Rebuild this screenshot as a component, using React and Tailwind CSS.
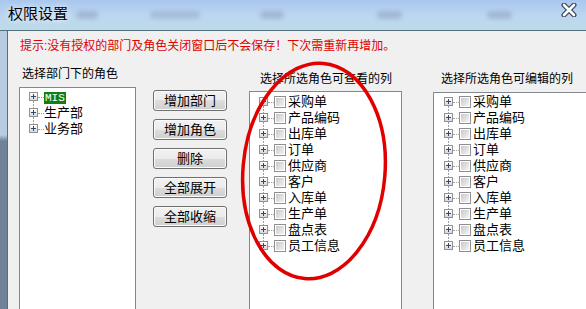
import React from "react";

const columns = ["采购单", "产品编码", "出库单", "订单", "供应商", "客户", "入库单", "生产单", "盘点表", "员工信息"];
const buttons = ["增加部门", "增加角色", "删除", "全部展开", "全部收缩"];

const Plus = () => (
  <span className="flex h-[9px] w-[9px] shrink-0 items-center justify-center border border-[#919191] bg-[linear-gradient(#ffffff,#d8d8d8)]">
    <svg width="5" height="5" viewBox="0 0 5 5">
      <path d="M0 2.5H5M2.5 0V5" stroke="#2f4a6d" strokeWidth="1" />
    </svg>
  </span>
);

const Check = () => (
  <span className="block h-[12px] w-[12px] shrink-0 border border-[#8e8f8f] bg-white p-[1px]">
    <span className="block h-full w-full bg-[linear-gradient(135deg,#c8c8c8,#f4f4f4)]" />
  </span>
);

// one tree line: plus box, dotted joints, optional checkbox
const TreeRow = ({ first, last, checkbox, children }) => (
  <div className="flex h-[16px] items-center whitespace-nowrap">
    <div className="flex h-full w-[9px] shrink-0 flex-col items-center">
      <div className={first ? "h-[3px]" : "h-[3px] w-0 border-l border-dotted border-[#a0a0a0]"} />
      <Plus />
      <div className={last ? "h-[4px]" : "h-[4px] w-0 border-l border-dotted border-[#a0a0a0]"} />
    </div>
    <div className="w-[6px] shrink-0 border-t border-dotted border-[#a0a0a0]" />
    {checkbox && <Check />}
    <span className={checkbox ? "ml-[2px] text-[13px] leading-[14px]" : "text-[13px] leading-[14px]"}>{children}</span>
  </div>
);

const Button = ({ label }) => (
  <button className="flex h-[21px] w-[74px] items-center justify-center rounded-[3px] border border-[#707070] bg-[linear-gradient(#f2f2f2,#ebebeb_50%,#dddddd_50%,#cfcfcf)] text-[13px] leading-none text-black shadow-[inset_0_0_0_1px_#fbfbfb]">
    {label}
  </button>
);

const ColumnList = () => (
  <>
    {columns.map((c, i) => (
      <TreeRow key={c} first={i === 0} last={i === columns.length - 1} checkbox>
        {c}
      </TreeRow>
    ))}
  </>
);

export default function App() {
  return (
    <div className="relative h-[309px] w-[586px] overflow-hidden bg-[#f0f0f0] font-['Liberation_Sans','Noto_Sans_CJK_SC',sans-serif] text-[12px] text-black">
      {/* aero title bar */}
      <div className="flex h-[31px] items-start border-b border-[#56707f] bg-[linear-gradient(#a9c7ee,#bdd6f1_55%,#bcdbe6)]">
        <span className="ml-[8px] mt-[5px] shrink-0 text-[15px] leading-[18px] [text-shadow:0_0_6px_#ffffff]">权限设置</span>
        <span className="ml-[8px] mt-[11px] h-[8px] w-[22px] shrink-0 rounded bg-[#6a7a8e] opacity-30 blur-[2px]" />
        <span className="ml-[52px] mt-[11px] h-[8px] w-[50px] shrink-0 rounded bg-[#6a7a8e] opacity-25 blur-[2px]" />
        <span className="ml-[60px] mt-[11px] h-[8px] w-[24px] shrink-0 rounded bg-[#6a7a8e] opacity-30 blur-[2px]" />
        <span className="ml-[93px] mt-[11px] h-[8px] w-[25px] shrink-0 rounded bg-[#6a7a8e] opacity-30 blur-[2px]" />
        <span className="ml-[85px] mt-[11px] h-[8px] w-[25px] shrink-0 rounded bg-[#6a7a8e] opacity-30 blur-[2px]" />
        <svg className="ml-[49px] mt-[3px] shrink-0" width="16" height="14" viewBox="0 0 16 14">
          <path d="M3 2L13 12M13 2L3 12" stroke="#3a4656" strokeWidth="5" strokeLinecap="round" />
          <path d="M3 2L13 12M13 2L3 12" stroke="#ffffff" strokeWidth="2.6" strokeLinecap="round" />
        </svg>
      </div>

      <div className="flex h-[278px]">
        {/* window frame edge */}
        <div className="w-[8px] shrink-0 border-r border-[#5d6d7e] bg-[linear-gradient(#b8cce1_0,#b8cce1_104px,#6f8298_110px,#6f8298)]" />

        <div className="min-w-0 flex-1 overflow-hidden pt-[8px]">
          <div className="whitespace-nowrap pl-[12px] leading-[14px] text-[#e00000]">
            提示:没有授权的部门及角色关闭窗口后不会保存！下次需重新再增加。
          </div>

          <div className="mt-[11px] flex items-start">
            {/* roles */}
            <div className="ml-[11px] w-[117px] shrink-0">
              <div className="h-[23px] pl-[3px] pt-[3px] leading-[14px]">选择部门下的角色</div>
              <div className="h-[240px] border border-[#828790] bg-white pl-[9px] pt-[1px]">
                <TreeRow first>
                  <span className="bg-[#0f7f16] px-[1px] font-['Liberation_Mono',monospace] text-[11px] leading-[13px] text-white">MIS</span>
                </TreeRow>
                <TreeRow>生产部</TreeRow>
                <TreeRow last>业务部</TreeRow>
              </div>
            </div>

            {/* actions */}
            <div className="ml-[17px] flex shrink-0 flex-col gap-[8px] pt-[26px]">
              {buttons.map((b) => (
                <Button key={b} label={b} />
              ))}
            </div>

            {/* visible columns */}
            <div className="ml-[22px] w-[153px] shrink-0">
              <div className="h-[27px] whitespace-nowrap pl-[11px] pt-[8px] leading-[14px]">选择所选角色可查看的列</div>
              <div className="h-[240px] border border-[#828790] bg-white pl-[9px] pt-[2px]">
                <ColumnList />
              </div>
            </div>

            {/* editable columns */}
            <div className="ml-[31px] w-[170px] shrink-0">
              <div className="h-[28px] whitespace-nowrap pl-[8px] pt-[8px] leading-[14px]">选择所选角色可编辑的列</div>
              <div className="h-[240px] border border-[#828790] bg-white pl-[10px] pt-[1px]">
                <ColumnList />
              </div>
            </div>
          </div>
        </div>
      </div>

      {/* hand-drawn red mark */}
      <svg className="pointer-events-none absolute left-0 top-0" width="586" height="309" viewBox="0 0 586 309">
        <ellipse cx="314" cy="171" rx="71" ry="108" transform="rotate(5 314 171)" fill="none" stroke="#e00000" strokeWidth="3.5" />
      </svg>
    </div>
  );
}
